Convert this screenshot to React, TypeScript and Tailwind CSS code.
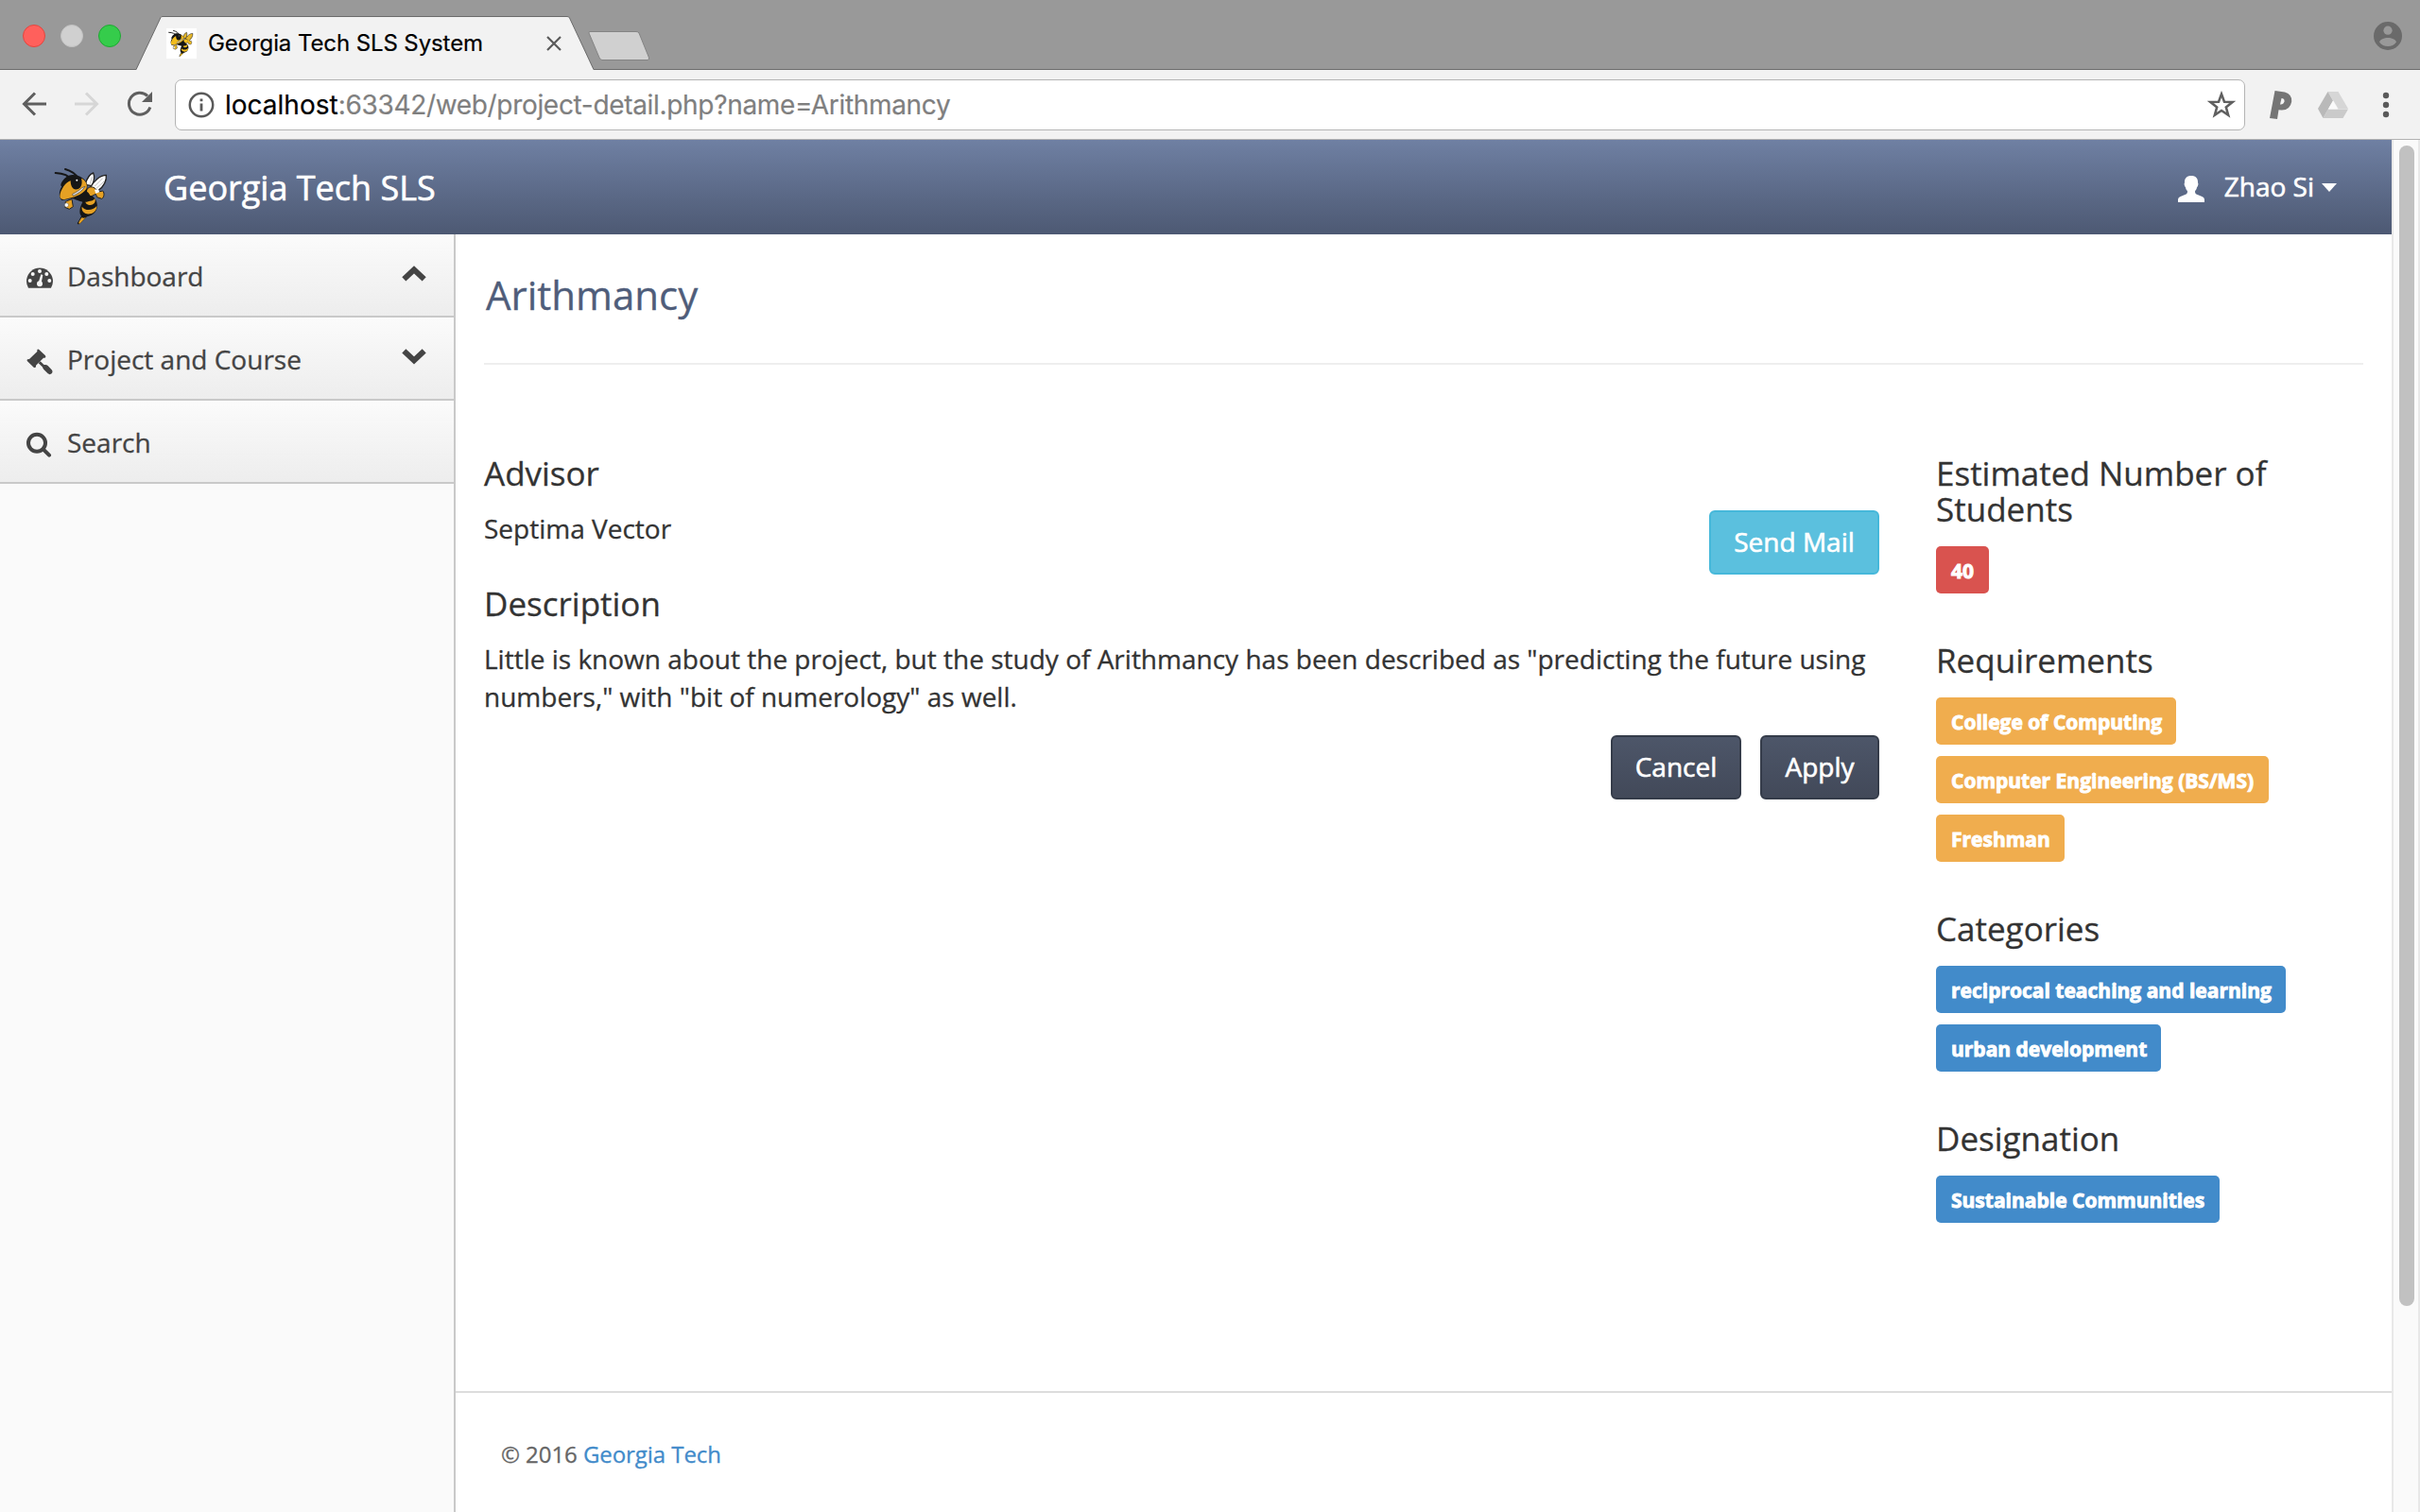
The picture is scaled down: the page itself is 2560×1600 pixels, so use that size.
import type { ReactNode } from "react";

type BeeProps = { className?: string; body?: string; wing?: string };

function Bee({ className, body = "#e6a124", wing = "#fff" }: BeeProps) {
  return (
    <svg viewBox="48 48 174 192" className={className}>
      <g fill="none" stroke="#161616" strokeLinecap="round">
        <path d="M56 69 C80 70 98 76 108 92" strokeWidth="6" />
        <path d="M87 57 C106 62 120 72 130 88" strokeWidth="6" />
      </g>
      <path d="M150 106 C156 86 166 72 176 69 C181 80 178 96 172 110 Z" fill={wing} stroke="#222" strokeWidth="4" />
      <path d="M166 116 C178 94 198 76 217 76 C219 92 210 112 192 124 Z" fill={wing} stroke="#222" strokeWidth="4" />
      <path d="M166 104 L172 82 M180 112 L206 86 M186 118 L210 96" stroke="#999" strokeWidth="2" />
      <path d="M152 132 C154 116 168 108 182 118 L188 130 L206 126 C213 132 210 148 203 151 L188 146 L184 136 L164 146 Z" fill={body} stroke="#222" strokeWidth="3" />
      <path d="M180 122 L192 120 L196 130 L184 134 Z" fill={wing} />
      <path d="M140 152 C160 132 180 140 187 162 C194 186 178 204 156 208 L133 231 C126 234 123 229 128 224 L138 206 C128 194 136 172 142 162 Z" fill="#161616" />
      <path d="M150 152 C162 162 176 158 181 150 C186 162 176 172 164 171 C154 170 148 160 150 152 Z" fill={body} />
      <path d="M140 176 C150 190 174 190 187 174 C188 192 170 202 156 199 C144 196 138 186 140 176 Z" fill={body} />
      <path d="M139 211 C146 213 152 212 155 208 L133 230 C128 230 130 226 132 222 Z" fill={body} />
      <path d="M88 84 C100 70 126 74 140 84 C156 94 160 110 156 128 C170 138 172 156 160 160 C140 166 120 152 108 150 L76 156 C66 146 66 128 76 112 C68 108 78 92 88 84 Z" fill="#161616" />
      <path d="M104 94 C90 96 70 124 70 144 C72 152 78 155 88 152 C110 148 140 140 154 120 C160 106 150 90 138 86 C142 100 140 114 128 120 C112 126 104 112 104 94 Z" fill={body} />
      <path d="M112 142 C126 136 142 126 150 112 L140 116 C132 124 122 130 110 136 Z" fill="#ddd" stroke="#444" strokeWidth="2" />
      <circle cx="124" cy="92" r="3" fill="#fff" />
      <path d="M88 160 L108 152 L112 176 L100 184 L86 178 Z" fill={body} stroke="#222" strokeWidth="3" />
      <circle cx="91" cy="171" r="6.5" fill="#fff" stroke="#555" strokeWidth="1.5" />
    </svg>
  );
}

function DashboardIcon() {
  return (
    <svg viewBox="84 432 84 68" className="h-[22.6px] w-[28px]">
      <path d="M90 497.500 A42 42 0 1 1 162 497.500 Z" fill="#444" />
      <g fill="#f6f6f6">
        <circle cx="126" cy="444" r="6" />
        <circle cx="104" cy="453" r="6" />
        <circle cx="148" cy="453" r="6" />
        <circle cx="95" cy="474" r="6" />
        <circle cx="157" cy="474" r="6" />
        <circle cx="126" cy="484" r="9" />
        <path d="M130 454 L136 456 L131 482 L122 480 Z" />
      </g>
    </svg>
  );
}

function GavelIcon() {
  return (
    <svg viewBox="0 0 84 84" className="size-[28px]" fill="#444">
      <path d="M34 3 Q37 0 40 3 L60 22 Q63 26 59 29 L54 29 L30 53 L30 58 Q27 62 23 59 L3 40 Q0 37 3 34 L9 33 L34 9 Z" />
      <path d="M38 46 L44 40 L58 53 L52 59 Z" />
      <path d="M51 58 Q50 50 58 51 Q64 50 68 54 L80 67 Q85 73 80 79 Q74 84 68 79 L55 66 Q51 62 51 58 Z" />
    </svg>
  );
}

function SearchIcon() {
  return (
    <svg viewBox="84 952 80 80" className="size-[26.700px]" fill="none" stroke="#444">
      <circle cx="117" cy="987" r="27" strokeWidth="12" />
      <path d="M137 1007 L156 1026" strokeWidth="12" strokeLinecap="round" />
    </svg>
  );
}

function Chevron({ up }: { up?: boolean }) {
  return (
    <svg viewBox="0 0 78 50" className="h-[16.700px] w-[26px]" fill="none" stroke="#444" strokeWidth="18">
      <path d={up ? "M7 43 L39 13 L71 43" : "M7 7 L39 37 L71 7"} strokeLinejoin="miter" />
    </svg>
  );
}

function NavItem({ icon, label, children }: { icon: ReactNode; label: string; children?: ReactNode }) {
  return (
    <div className="flex h-[88px] items-start border-b-2 border-[#c9c9c9] bg-linear-to-b from-[#fbfbfb] to-[#ededed] pr-[29px] pl-[28px]">
      <div className="mt-[32.500px] flex h-[28px] w-[43px] items-center">{icon}</div>
      <div className="mt-[24px] flex-1 text-[28px] leading-[40px] text-[#444]">{label}</div>
      <div className="mt-[33px]">{children}</div>
    </div>
  );
}

function Tag({ color, children, width }: { color: string; children: ReactNode; width: string }) {
  return (
    <span className={`flex h-[50px] items-center rounded-[5px] pl-[16px] text-[21px] leading-[50px] font-bold whitespace-nowrap text-white [-webkit-text-stroke:0.9px] ${color} ${width}`}>
      <span className="pt-[2px]">{children}</span>
    </span>
  );
}

function TagGroup({ title, children }: { title: string; children: ReactNode }) {
  return (
    <section>
      <h3 className="mb-[20px] text-[35px] leading-[38px]">{title}</h3>
      <div className="flex flex-col items-start gap-[12px]">{children}</div>
    </section>
  );
}

function TitleBar() {
  return (
    <div className="relative flex h-[74px] items-start border-b border-[#6c6c6c] bg-[#999]">
      <svg viewBox="0 0 720 74" className="absolute top-0 left-0 h-[74px] w-[720px]">
        <path d="M144 74 L170 18.500 Q170.500 17.500 172 17.500 H600 Q602 17.500 602.500 19 L628 74 Z" fill="#f2f2f2" />
        <path d="M144 73.500 L170 18.500 Q170.500 17.500 172 17.500 H600 Q602 17.500 602.500 19 L628 73.500" fill="none" stroke="#6c6c6c" />
        <path d="M624 33.500 H673 Q675 33.500 676 35 L686.500 61 Q687 63.500 685 63.500 H637 Q635 63.500 634 61 L623 35 Q622.500 33.500 624 33.500 Z" fill="#d0d0d0" stroke="#848484" />
      </svg>
      <div className="relative flex h-[76px] w-[128px] items-center gap-[16px] pl-[24px]">
        <span className="size-[24px] rounded-full border border-[#e2463f] bg-[#ff605c]" />
        <span className="size-[24px] rounded-full border border-[#c2c2c2] bg-[#d0d0d0]" />
        <span className="size-[24px] rounded-full border border-[#1fa833] bg-[#35cc4b]" />
      </div>
      <div className="relative mt-[30px] ml-[48px] size-[32px] bg-white">
        <Bee className="mt-px ml-px h-[30px] w-[28px]" body="#f2bd1d" wing="#f2bd1d" />
      </div>
      <div className="relative mt-[30px] ml-[12px] w-[358px] font-['Inter',sans-serif] text-[24px] leading-[32px] tracking-[-0.100px] whitespace-nowrap text-black [-webkit-text-stroke:0.2px]">
        Georgia Tech SLS System
      </div>
      <svg viewBox="0 0 16 16" className="relative mt-[38px] size-[16px]">
        <path d="M1 1 L15 15 M15 1 L1 15" stroke="#5a5a5a" strokeWidth="2.200" />
      </svg>
      <svg viewBox="0 0 30 30" className="mt-[23px] mr-[19px] ml-auto size-[30px]">
        <circle cx="15" cy="15" r="15" fill="#6a6a6a" />
        <circle cx="15" cy="9.200" r="4.600" fill="#999" />
        <path d="M6 21.500 C8 15.500 22 15.500 24 21.500 C20 27.500 10 27.500 6 21.500 Z" fill="#999" />
      </svg>
    </div>
  );
}

function Toolbar() {
  return (
    <div className="flex h-[74px] items-center border-b border-[#b1b1b1] bg-[#f2f2f2] pl-[23px]">
      <svg viewBox="0 0 26 26" className="mb-[2px] size-[26px]" fill="none" stroke="#5f5f5f" strokeWidth="3">
        <path d="M26 13 H2.500 M14 1.500 L2.500 13 L14 24.500" />
      </svg>
      <svg viewBox="0 0 26 26" className="mb-[2px] ml-[30px] size-[26px]" fill="none" stroke="#d6d6d6" strokeWidth="3">
        <path d="M0 13 H23.500 M12 1.500 L23.500 13 L12 24.500" />
      </svg>
      <svg viewBox="0 0 28 28" className="mb-[2px] ml-[29px] size-[28px]">
        <path d="M24.800 17.500 A11.500 11.500 0 1 1 22 5.500" fill="none" stroke="#5f5f5f" strokeWidth="3" />
        <path d="M27 1 V12 H16 Z" fill="#5f5f5f" />
      </svg>
      <div className="ml-[23px] flex h-[54px] w-[2190px] items-center rounded-[7px] border border-[#b4b4b4] bg-white pl-[13px]">
        <svg viewBox="0 0 28 28" className="size-[28px]">
          <circle cx="14" cy="14" r="12.200" fill="none" stroke="#5a5a5a" strokeWidth="2.500" />
          <path d="M14 12.500 V20.500 M14 7.500 V10.300" stroke="#5a5a5a" strokeWidth="2.800" />
        </svg>
        <div className="ml-[11px] flex-1 font-['Inter',sans-serif] text-[28px] leading-[40px] whitespace-nowrap text-[#7f7f7f] [-webkit-text-stroke:0.2px]">
          <span className="text-black">localhost</span>
          <span className="tracking-[-0.320px]">:63342/web/project-detail.php?name=Arithmancy</span>
        </div>
        <svg viewBox="0 0 30 30" className="mr-[9px] size-[30px]">
          <path d="M15 3.500 L18 11.700 L26.600 12 L19.800 17.400 L22.200 25.800 L15 21 L7.800 25.800 L10.200 17.400 L3.400 12 L12 11.700 Z" fill="none" stroke="#5f5f5f" strokeWidth="2.500" />
        </svg>
      </div>
      <svg viewBox="0 0 26 32" className="ml-[25px] h-[32px] w-[26px]">
        <path d="M6.500 1 L17 2.500 Q25 5 24.200 12.500 Q22.500 22 13 21.500 L10.500 21.300 L9 31 L1 30 Z" fill="#757575" />
        <path d="M13.500 9 Q17 9 16.500 12.500 Q15.500 16 12 15.500 Z" fill="#f2f2f2" />
      </svg>
      <svg viewBox="0 0 32 28" className="ml-[26px] h-[28px] w-[32px]">
        <path d="M10.500 0 H21.500 L32 18 H21.500 Z" fill="#d6d6d6" />
        <path d="M10.500 0 L16 9.500 L5.500 28 L0 18 Z" fill="#b9b9b9" />
        <path d="M10.700 18.500 H32 L26.500 28 H5.500 Z" fill="#cacaca" />
        <path d="M16 9.500 L21 18.500 H10.800 Z" fill="#fafafa" />
      </svg>
      <svg viewBox="0 0 8 28" className="ml-[36px] h-[28px] w-[8px]" fill="#5a5a5a">
        <circle cx="4" cy="4" r="3.200" />
        <circle cx="4" cy="14" r="3.200" />
        <circle cx="4" cy="24" r="3.200" />
      </svg>
    </div>
  );
}

function SiteHeader() {
  return (
    <header className="flex h-[100px] items-start bg-linear-to-b from-[#6f80a3] to-[#4d5973] text-white [-webkit-text-stroke:0.6px]">
      <Bee className="mt-[28px] ml-[56px] h-[64px] w-[58px]" />
      <div className="mt-[31px] ml-[59px] text-[36px] leading-[40px]">Georgia Tech SLS</div>
      <svg viewBox="0 0 84 84" className="mt-[38px] ml-auto size-[28px]" fill="#fff">
        <path d="M42 0 C56 0 64 8 63 22 C66 26 63 34 60 37 C59 44 56 46 54 49 C54 56 56 58 62 60 L78 67 Q84 70 84 76 V84 H0 V76 Q0 70 6 67 L22 60 C28 58 30 56 30 49 C28 46 25 44 24 37 C21 34 18 26 21 22 C20 8 28 0 42 0 Z" />
      </svg>
      <div className="mt-[29px] ml-[21px] text-[28px] leading-[40px]">Zhao Si</div>
      <svg viewBox="0 0 16 9" className="mt-[46px] mr-[58px] ml-[8px] h-[9px] w-[16px]">
        <path d="M0 0 H16 L8 9 Z" fill="#fff" />
      </svg>
    </header>
  );
}

export default function App() {
  return (
    <div className="flex h-[1600px] w-[2560px] flex-col overflow-hidden bg-white font-['Open_Sans',sans-serif] text-[#333] [-webkit-text-stroke:0.3px]">
      <TitleBar />
      <Toolbar />
      <div className="flex min-h-0 flex-1">
        <div className="flex w-[2530px] flex-col">
          <SiteHeader />
          <div className="flex min-h-0 flex-1">
            <aside className="w-[482px] border-r-2 border-[#c9c9c9] bg-[#fafafa]">
              <NavItem icon={<DashboardIcon />} label="Dashboard">
                <Chevron up />
              </NavItem>
              <NavItem icon={<GavelIcon />} label="Project and Course">
                <Chevron />
              </NavItem>
              <NavItem icon={<SearchIcon />} label="Search" />
            </aside>
            <main className="flex w-[2048px] flex-col">
              <div className="h-[1224px] px-[30px] pt-[41px]">
                <h1 className="pl-[2px] text-[42px] leading-[46px] text-[#4f5d7a]">Arithmancy</h1>
                <div className="mt-[49px] h-[2px] bg-[#eee]" />
                <div className="mt-[95px] flex">
                  <div className="w-[1476px]">
                    <h3 className="text-[35px] leading-[40px]">Advisor</h3>
                    <div className="mt-[18px] flex h-[40px] items-start justify-between">
                      <p className="text-[28px] leading-[40px]">Septima Vector</p>
                      <button className="mt-px h-[68px] w-[180px] shrink-0 rounded-[6px] border-2 border-[#46b8da] bg-[#5bc0de] pb-[3px] text-[28px] leading-[40px] text-white [-webkit-text-stroke:0.6px]">
                        Send Mail
                      </button>
                    </div>
                    <h3 className="mt-[40px] text-[35px] leading-[40px]">Description</h3>
                    <p className="mt-[18px] text-[28px] leading-[40px] whitespace-nowrap">
                      Little is known about the project, but the study of Arithmancy has been described as "predicting the future using
                      <br />
                      numbers," with "bit of numerology" as well.
                    </p>
                    <div className="mt-[21px] flex justify-end gap-[20px]">
                      <button className="h-[68px] w-[138px] rounded-[6px] border-2 border-[#353c4a] bg-linear-to-b from-[#4d5669] to-[#424959] pb-[3px] text-[28px] leading-[40px] text-white [-webkit-text-stroke:0.6px]">
                        Cancel
                      </button>
                      <button className="h-[68px] w-[126px] rounded-[6px] border-2 border-[#353c4a] bg-linear-to-b from-[#4d5669] to-[#424959] pb-[3px] text-[28px] leading-[40px] text-white [-webkit-text-stroke:0.6px]">
                        Apply
                      </button>
                    </div>
                  </div>
                  <div className="ml-[60px] flex w-[380px] flex-col gap-[52px] pt-px">
                    <TagGroup title="Estimated Number of Students">
                      <Tag color="bg-[#d9534f]" width="w-[56px]">40</Tag>
                    </TagGroup>
                    <TagGroup title="Requirements">
                      <Tag color="bg-[#f0ad4e]" width="w-[254px]">College of Computing</Tag>
                      <Tag color="bg-[#f0ad4e]" width="w-[352px]">Computer Engineering (BS/MS)</Tag>
                      <Tag color="bg-[#f0ad4e]" width="w-[136px]">Freshman</Tag>
                    </TagGroup>
                    <TagGroup title="Categories">
                      <Tag color="bg-[#428bca]" width="w-[370px]">reciprocal teaching and learning</Tag>
                      <Tag color="bg-[#428bca]" width="w-[238px]">urban development</Tag>
                    </TagGroup>
                    <TagGroup title="Designation">
                      <Tag color="bg-[#428bca]" width="w-[300px]">Sustainable Communities</Tag>
                    </TagGroup>
                  </div>
                </div>
              </div>
              <footer className="flex-1 border-t-2 border-[#ddd] pt-[45px] pl-[48px] text-[24px] leading-[40px] tracking-[-0.060px] text-[#666]">
                © 2016 <a className="text-[#428bca]">Georgia Tech</a>
              </footer>
            </main>
          </div>
        </div>
        <div className="w-[30px] border-x-2 border-[#e8e8e8] bg-[#fafafa] pt-[6px] pl-[6px]">
          <div className="h-[1228px] w-[16px] rounded-full bg-[#c1c1c1]" />
        </div>
      </div>
    </div>
  );
}
